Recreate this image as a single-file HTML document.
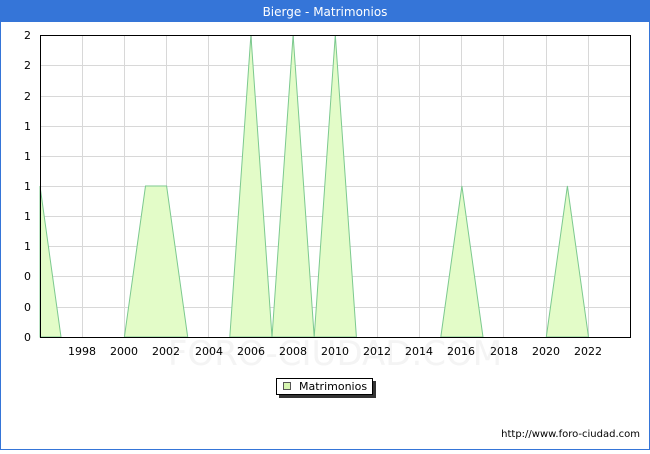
<!DOCTYPE html>
<html><head><style>
body{margin:0;width:650px;height:450px;overflow:hidden;background:#fff;font-family:"DejaVu Sans","Liberation Sans",sans-serif;}
</style></head><body>
<svg width="650" height="450" xmlns="http://www.w3.org/2000/svg" font-family="DejaVu Sans, Liberation Sans, sans-serif">
<rect x="0.5" y="0.5" width="649" height="449" fill="#fff" stroke="#3575d8"/>
<rect x="0" y="0" width="650" height="22" fill="#3575d8"/>
<text x="325" y="16" text-anchor="middle" fill="#fff" font-size="12">Bierge - Matrimonios</text>
<g stroke="#d8d8d8" stroke-width="1">
<path d="M82.5 35V337M124.5 35V337M166.5 35V337M208.5 35V337M251.5 35V337M293.5 35V337M335.5 35V337M377.5 35V337M419.5 35V337M461.5 35V337M503.5 35V337M546.5 35V337M588.5 35V337"/>
<path d="M40 65.5H630M40 96.5H630M40 126.5H630M40 156.5H630M40 186.5H630M40 216.5H630M40 246.5H630M40 276.5H630M40 307.5H630"/>
</g>
<text x="335" y="365" text-anchor="middle" fill="#f4f4f4" font-size="34">FORO-CIUDAD.COM</text>
<g fill="#e3fcc8" stroke="#7cc98f" stroke-width="1">
<polygon points="40,186 61,337 40,337"/>
<polygon points="124.4,337 145.5,186 166.6,186 187.7,337"/>
<polygon points="229.8,337 250.9,35 272,337 293.1,35 314.2,337 335.3,35 356.4,337"/>
<polygon points="440.8,337 461.9,186 483,337"/>
<polygon points="546.3,337 567.4,186 588.5,337"/>
</g>
<rect x="40.5" y="35.5" width="590" height="302" fill="none" stroke="#000"/>
<g font-size="11" fill="#000" text-anchor="end">
<text x="31" y="39">2</text><text x="31" y="69">2</text><text x="31" y="100">2</text><text x="31" y="130">1</text><text x="31" y="160">1</text><text x="31" y="190">1</text><text x="31" y="220">1</text><text x="31" y="250">1</text><text x="31" y="280">0</text><text x="31" y="311">0</text><text x="31" y="341">0</text>
</g>
<g font-size="11" fill="#000" text-anchor="middle">
<text x="82" y="355">1998</text><text x="124" y="355">2000</text><text x="166" y="355">2002</text><text x="209" y="355">2004</text><text x="251" y="355">2006</text><text x="293" y="355">2008</text><text x="335" y="355">2010</text><text x="377" y="355">2012</text><text x="419" y="355">2014</text><text x="461" y="355">2016</text><text x="504" y="355">2018</text><text x="546" y="355">2020</text><text x="588" y="355">2022</text>
</g>
<rect x="279" y="381" width="97" height="17" fill="#333"/>
<rect x="276.5" y="378.5" width="96" height="16" fill="#fff" stroke="#000"/>
<rect x="283.5" y="382.5" width="7" height="7" fill="#d6f5b0" stroke="#555"/>
<text x="299" y="390" font-size="11" fill="#000">Matrimonios</text>
<text x="640" y="437" text-anchor="end" font-size="10" fill="#000">http://www.foro-ciudad.com</text>
</svg>
</body></html>
